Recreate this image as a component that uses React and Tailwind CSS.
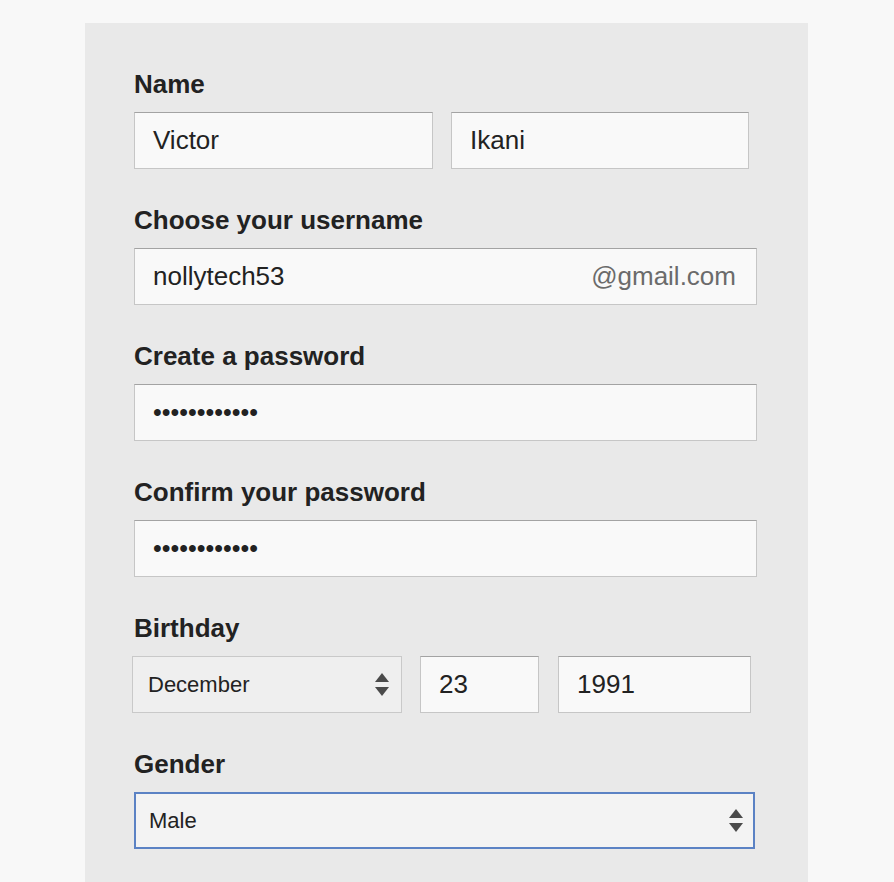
const font = { fontFamily: '"Liberation Sans", Arial, sans-serif' };

const Arrows = () => (
	<svg width="16" height="23" viewBox="0 0 16 23" className="shrink-0">
		<path d="M8 0 L15 9 L1 9 Z" fill="#4a4a4a" />
		<path d="M1 14 L15 14 L8 23 Z" fill="#4a4a4a" />
	</svg>
);

const Label = ({ children }) => (
	<div className="text-[26px] font-bold leading-[30px] text-[#222]">{children}</div>
);

const Field = ({ className = "", children }) => (
	<div
		className={`h-[57px] flex items-center pl-[18px] pr-5 bg-[#f9f9f9] border border-[#c6c6c6] border-t-[#a3a3a3] text-[26px] text-[#222] ${className}`}
	>
		{children}
	</div>
);

const App = () => {
	return (
		<div className="min-h-[882px] bg-[#f8f8f8] pl-[85px] pt-[23px]" style={font}>
			<div className="w-[723px] min-h-[859px] bg-[#e9e9e9] pt-[46px] pl-[49px]">
				<Label>Name</Label>
				<div className="flex gap-[18px] mt-[13px]">
					<Field className="w-[299px]">Victor</Field>
					<Field className="w-[298px]">Ikani</Field>
				</div>

				<div className="mt-[36px]">
					<Label>Choose your username</Label>
				</div>
				<Field className="w-[623px] mt-[13px] justify-between">
					<span>nollytech53</span>
					<span className="text-[#6b6b6b]">@gmail.com</span>
				</Field>

				<div className="mt-[36px]">
					<Label>Create a password</Label>
				</div>
				<Field className="w-[623px] mt-[13px]">
					<span className="text-[25px]">••••••••••••</span>
				</Field>

				<div className="mt-[36px]">
					<Label>Confirm your password</Label>
				</div>
				<Field className="w-[623px] mt-[13px]">
					<span className="text-[25px]">••••••••••••</span>
				</Field>

				<div className="mt-[36px]">
					<Label>Birthday</Label>
				</div>
				<div className="flex mt-[13px] -ml-[2px]">
					<div className="w-[270px] h-[57px] flex items-center justify-between pl-[15px] pr-[11px] bg-[#efefef] border border-[#c9c9c9] text-[22px] text-[#222]">
						<span>December</span>
						<Arrows />
					</div>
					<Field className="w-[119px] ml-[18px]">23</Field>
					<Field className="w-[193px] ml-[19px]">1991</Field>
				</div>

				<div className="mt-[36px]">
					<Label>Gender</Label>
				</div>
				<div className="w-[621px] h-[57px] mt-[13px] flex items-center justify-between pl-[13px] pr-[9px] bg-[#f3f3f3] border-2 border-[#5b82c4] text-[22px] text-[#222]">
					<span>Male</span>
					<Arrows />
				</div>
			</div>
		</div>
	);
};

export default App;
